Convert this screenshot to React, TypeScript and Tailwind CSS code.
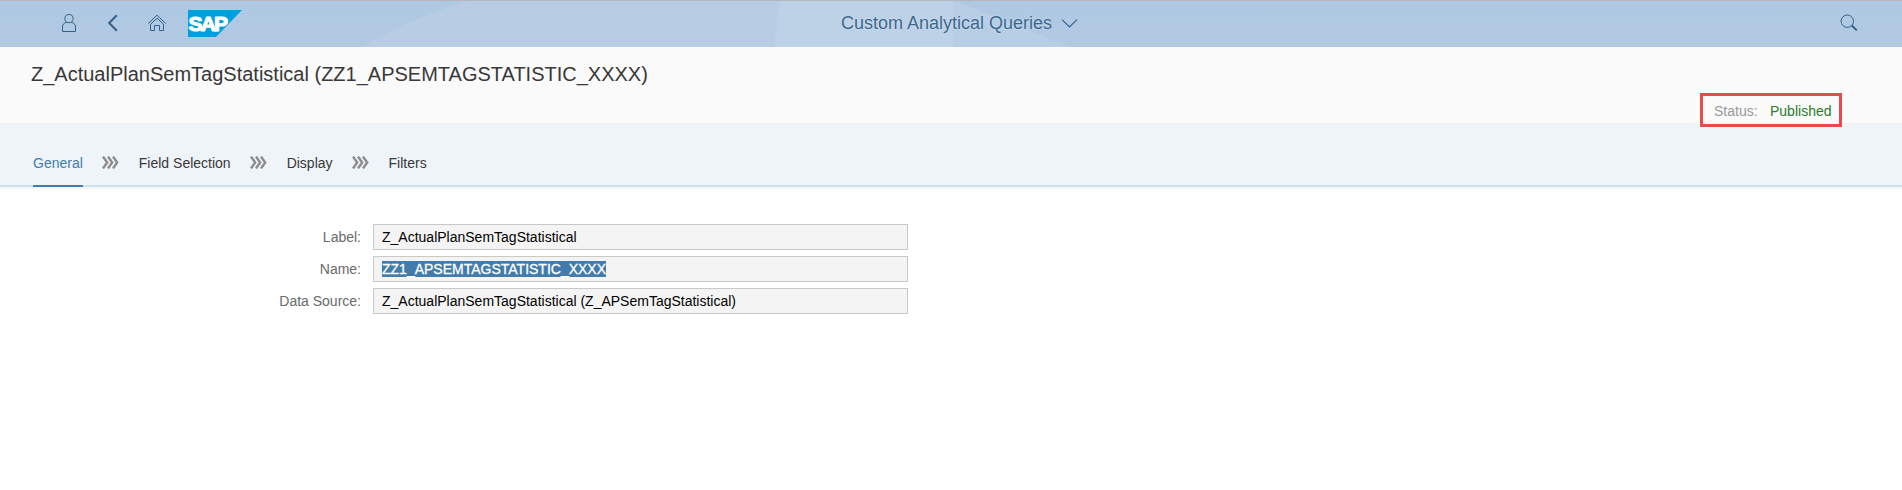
import { Fragment } from "react";

const steps = ["General", "Field Selection", "Display", "Filters"];

const fields = [
  { label: "Label:", value: "Z_ActualPlanSemTagStatistical", selected: false },
  { label: "Name:", value: "ZZ1_APSEMTAGSTATISTIC_XXXX", selected: true },
  { label: "Data Source:", value: "Z_ActualPlanSemTagStatistical (Z_APSemTagStatistical)", selected: false },
];

function Wallpaper() {
  return (
    <svg className="absolute inset-0" width="1902" height="46" viewBox="0 1 1902 46" fill="none">
      <path d="M362 47Q410 19 466 1H953V47Z" fill="#b8cde4" />
      <path d="M774 47L780 1H953V47Z" fill="#bdd1e7" />
      <path d="M953 1H955L1070 47H953Z" fill="#b8cee5" />
    </svg>
  );
}

function UserIcon() {
  return (
    <svg className="mb-[1px]" width="16" height="20" viewBox="0 0 16 20" fill="none" stroke="#346187" strokeWidth="1">
      <circle cx="8" cy="5.6" r="4.1" />
      <path d="M5.6 9.3C2.8 9.8 1.5 11.6 1.5 14V18.5H14.5V14C14.5 11.6 13.2 9.8 10.4 9.3" />
    </svg>
  );
}

function BackIcon() {
  return (
    <svg className="mb-[1px] ml-[30px]" width="12" height="18" viewBox="0 0 12 18" fill="none" stroke="#346187" strokeWidth="2">
      <path d="M9.8 1.3L2.2 9L9.8 16.7" />
    </svg>
  );
}

function HomeIcon() {
  return (
    <svg className="mb-[1px] ml-[28px]" width="20" height="18" viewBox="0 0 20 18" fill="none" stroke="#346187" strokeWidth="1">
      <path d="M1.2 9.6L10 1.2L18.8 9.6" />
      <path d="M3.5 10.2L10 4.2L16.5 10.2V16.5H12.5V11.5H7.5V16.5H3.5Z" />
    </svg>
  );
}

function SapLogo() {
  return (
    <svg className="ml-[21px]" width="54" height="27" viewBox="0 0 54 27">
      <path d="M0 0H54L28 27H0Z" fill="#009fdf" />
      <text
        x="0.6"
        y="21"
        fill="#fff"
        stroke="#fff"
        strokeWidth="1.2"
        fontFamily="Liberation Sans, Arial, sans-serif"
        fontWeight="bold"
        fontSize="21"
        textLength="39.5"
        lengthAdjust="spacing"
      >
        SAP
      </text>
    </svg>
  );
}

function StepSeparator() {
  return (
    <svg className="mb-[1px]" width="17" height="13" viewBox="0 0 17 13" fill="none" stroke="#8c8c8c" strokeWidth="2.4">
      <path d="M1 0.6L5.2 6.5L1 12.4M6 0.6L10.2 6.5L6 12.4M11 0.6L15.2 6.5L11 12.4" />
    </svg>
  );
}

export default function App() {
  return (
    <div className="h-[490px] w-[1902px] overflow-hidden bg-white font-['Liberation_Sans',Arial,sans-serif] text-sm text-[#383838]">
      <header className="relative h-[47px] border-t border-[#b5b5bb] bg-linear-to-b from-[#aec9e4] to-[#b3c9e1]">
        <Wallpaper />
        <div className="relative grid h-full grid-cols-[1fr_auto_1fr] items-center">
          <div className="flex items-center pb-[1px] pl-[61px]">
            <UserIcon />
            <BackIcon />
            <HomeIcon />
            <SapLogo />
          </div>
          <div className="flex items-center gap-[9px] pl-[17px] text-lg leading-[22px] text-[#3b688f] [text-shadow:0_0_2px_#ffffff80]">
            <span className="-mt-[2px]">Custom Analytical Queries</span>
            <svg className="-mt-[1px]" width="17" height="9" viewBox="0 0 17 9" fill="none" stroke="#346187" strokeWidth="1.1">
              <path d="M1 0.7L8.5 8L16 0.7" />
            </svg>
          </div>
          <div className="flex justify-end pb-[2px] pr-[44px]">
            <svg width="18" height="18" viewBox="0 0 18 18" fill="none" stroke="#346187">
              <circle cx="7.3" cy="7.2" r="6.2" />
              <path d="M11.7 11.5L16.8 16.4" strokeWidth="2" />
            </svg>
          </div>
        </div>
      </header>

      <section className="flex h-[76px] items-start justify-between bg-[#fafafa] pl-[31px] pr-[60px]">
        <h1 className="mt-[15px] text-xl leading-6">Z_ActualPlanSemTagStatistical (ZZ1_APSEMTAGSTATISTIC_XXXX)</h1>
        <div className="relative mt-[46px] flex h-[34px] w-[142px] items-center border-[3px] border-[#eb4b46] pl-[11px] pt-[2px] leading-4">
          <span className="w-[56px] text-[#999]">Status:</span>
          <span className="text-[#2b7d2b]">Published</span>
        </div>
      </section>

      <nav className="h-[64px] border-b-2 border-[#cfe0ef] bg-[#eff4f9] px-[33px]">
        <ol className="flex h-[64px] gap-[19px]">
          {steps.map((step, i) => (
            <Fragment key={step}>
              {i > 0 && (
                <li className="flex items-center pr-[1px] pt-[16px]">
                  <StepSeparator />
                </li>
              )}
              <li
                className={
                  i === 0
                    ? "border-b-2 border-[#427cac] pt-[32px] leading-4 text-[#427cac]"
                    : "pt-[32px] leading-4"
                }
              >
                {step}
              </li>
            </Fragment>
          ))}
        </ol>
      </nav>
      <div className="h-[2px] bg-[#f0f5f9]" />

      <main className="flex flex-col gap-[6px] pt-[35px]">
        {fields.map((field) => (
          <div key={field.label} className="flex h-[26px] items-center">
            <label className="w-[361px] text-right leading-4 text-[#6a6a6a]">{field.label}</label>
            <div className="ml-[12px] flex h-[26px] w-[535px] items-center border border-[#c9c9c9] bg-[#f4f4f4] pl-[8px] leading-4 text-black">
              <span className={field.selected ? "bg-[#427cac] text-white [-webkit-text-stroke:0.3px_white]" : ""}>
                {field.value}
              </span>
            </div>
          </div>
        ))}
      </main>
    </div>
  );
}
